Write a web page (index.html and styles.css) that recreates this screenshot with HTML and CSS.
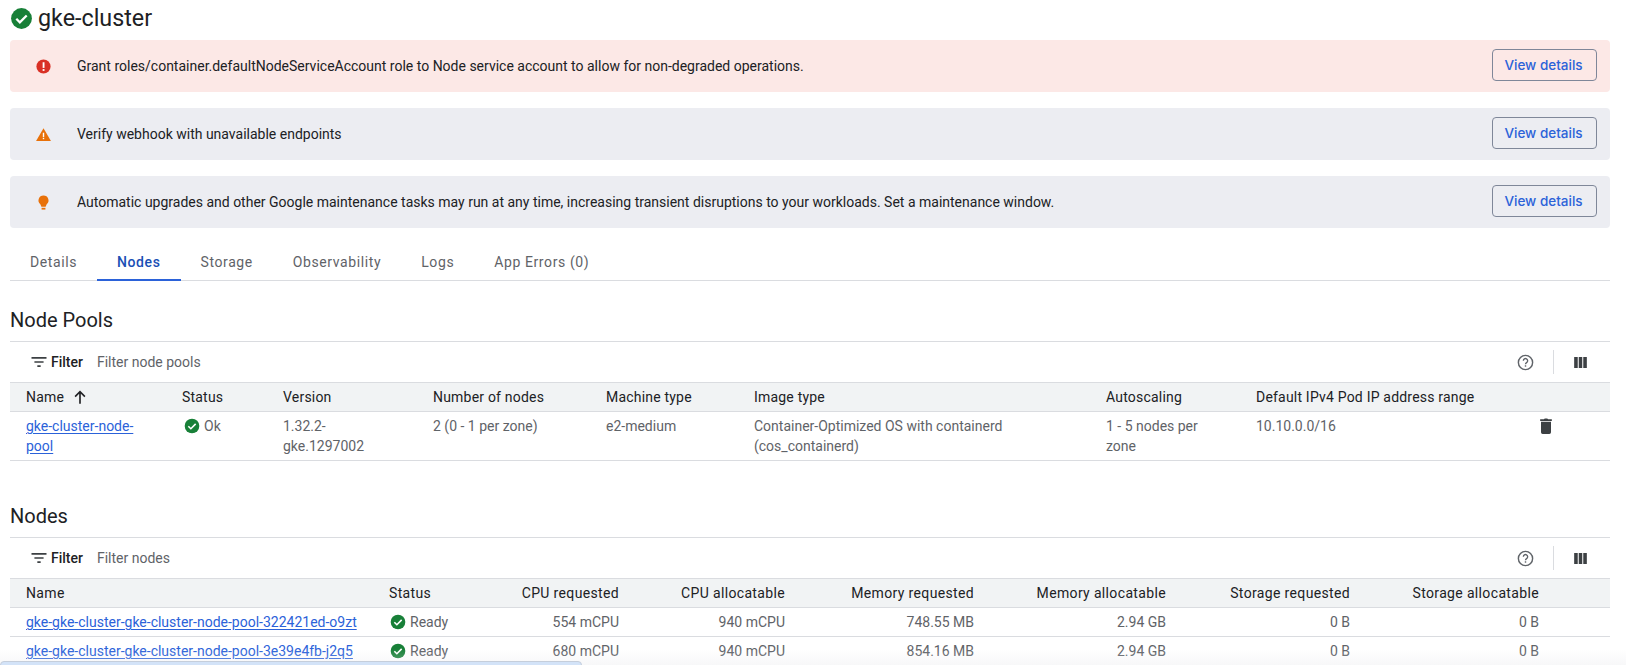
FILE: index.html
```html
<!DOCTYPE html>
<html lang="en">
<head>
  <meta charset="UTF-8" />
  <title>gke-cluster</title>
  <link rel="stylesheet" href="styles.css">
</head>
<body>
  <div class="title-row">
    <svg class="title-icon" viewBox="0 0 24 24"><circle cx="12" cy="12" r="10" fill="#188038"/><path d="M7 12.300l3.400 3.400L17 9.100" fill="none" stroke="#fff" stroke-width="2.200"/></svg>
    <h1>gke-cluster</h1>
  </div>

  <div class="banner error">
    <svg class="banner-icon" viewBox="0 0 24 24"><circle cx="12" cy="12" r="10" fill="#d93025"/><rect x="10.800" y="6" width="2.600" height="8" fill="#fff"/><rect x="10.800" y="15.600" width="2.600" height="2.600" fill="#fff"/></svg>
    <span class="banner-text">Grant roles/container.defaultNodeServiceAccount role to Node service account to allow for non-degraded operations.</span>
    <button class="details-btn">View details</button>
  </div>
  <div class="banner">
    <svg class="banner-icon" viewBox="0 0 24 24"><path d="M12 3L1.500 21h21z" fill="#e8710a"/><rect x="11" y="9.500" width="2" height="6" fill="#fff"/><rect x="11" y="16.600" width="2" height="2" fill="#fff"/></svg>
    <span class="banner-text">Verify webhook with unavailable endpoints</span>
    <button class="details-btn">View details</button>
  </div>
  <div class="banner">
    <svg class="banner-icon" viewBox="0 0 24 24"><path d="M12 2a7 7 0 0 0-4.500 12.400L9 18h6l1.500-3.600A7 7 0 0 0 12 2z" fill="#e8710a"/><rect x="9.300" y="19.500" width="5.400" height="2.500" fill="#e8710a"/></svg>
    <span class="banner-text">Automatic upgrades and other Google maintenance tasks may run at any time, increasing transient disruptions to your workloads. Set a maintenance window.</span>
    <button class="details-btn">View details</button>
  </div>

  <div class="tabs">
    <a class="tab">Details</a>
    <a class="tab active">Nodes</a>
    <a class="tab">Storage</a>
    <a class="tab">Observability</a>
    <a class="tab">Logs</a>
    <a class="tab">App Errors (0)</a>
  </div>

  <h2 class="section-title pools-title">Node Pools</h2>
  <div class="filter-bar">
    <svg class="filter-icon" viewBox="0 0 24 24"><path d="M3 6h18v2H3zM6.500 11h11v2h-11zM10 16h4v2h-4z" fill="#3c4043"/></svg>
    <span class="filter-label">Filter</span>
    <span class="filter-hint">Filter node pools</span>
    <svg class="help-icon" viewBox="0 0 24 24"><circle cx="12" cy="12" r="9" fill="none" stroke="#5f6368" stroke-width="1.800"/><path d="M9.300 9.700a2.700 2.700 0 1 1 4.300 2.200c-1 .7-1.600 1.200-1.600 2.400" fill="none" stroke="#5f6368" stroke-width="1.700"/><rect x="11.100" y="15.500" width="1.800" height="1.800" fill="#5f6368"/></svg>
    <span class="bar-divider"></span>
    <svg class="columns-icon" viewBox="0 0 24 24"><path d="M4 5h4.500v14H4zM9.800 5h4.400v14H9.800zM15.500 5H20v14h-4.500z" fill="#3c4043"/></svg>
  </div>
  <div class="table pool-table">
    <div class="row head">
      <span class="name-cell">Name <svg class="sort-icon" viewBox="0 0 24 24"><path d="M12 21V5M5.500 11.500L12 5l6.500 6.500" fill="none" stroke="#202124" stroke-width="2.200"/></svg></span>
      <span>Status</span><span>Version</span><span>Number of nodes</span><span>Machine type</span><span>Image type</span><span>Autoscaling</span><span>Default IPv4 Pod IP address range</span><span></span>
    </div>
    <div class="row body tall">
      <span><a class="link">gke-cluster-node-pool</a></span>
      <span class="status"><svg class="status-icon" viewBox="0 0 24 24"><circle cx="12" cy="12" r="11" fill="#188038"/><path d="M6.500 12.300l3.800 3.800 7.200-7.200" fill="none" stroke="#fff" stroke-width="2.400"/></svg>Ok</span>
      <span>1.32.2-gke.1297002</span>
      <span>2 (0 - 1 per zone)</span>
      <span>e2-medium</span>
      <span>Container-Optimized OS with containerd (cos_containerd)</span>
      <span>1 - 5 nodes per zone</span>
      <span>10.10.0.0/16</span>
      <span class="trash-cell"><svg class="trash-icon" viewBox="0 0 24 24"><path d="M6 7h12v12.500a2 2 0 0 1-2 2H8a2 2 0 0 1-2-2zM5 4h4.500l1-1h3l1 1H19v2H5z" fill="#3c4043"/></svg></span>
    </div>
  </div>

  <h2 class="section-title nodes-title">Nodes</h2>
  <div class="filter-bar">
    <svg class="filter-icon" viewBox="0 0 24 24"><path d="M3 6h18v2H3zM6.500 11h11v2h-11zM10 16h4v2h-4z" fill="#3c4043"/></svg>
    <span class="filter-label">Filter</span>
    <span class="filter-hint">Filter nodes</span>
    <svg class="help-icon" viewBox="0 0 24 24"><circle cx="12" cy="12" r="9" fill="none" stroke="#5f6368" stroke-width="1.800"/><path d="M9.300 9.700a2.700 2.700 0 1 1 4.300 2.200c-1 .7-1.600 1.200-1.600 2.400" fill="none" stroke="#5f6368" stroke-width="1.700"/><rect x="11.100" y="15.500" width="1.800" height="1.800" fill="#5f6368"/></svg>
    <span class="bar-divider"></span>
    <svg class="columns-icon" viewBox="0 0 24 24"><path d="M4 5h4.500v14H4zM9.800 5h4.400v14H9.800zM15.500 5H20v14h-4.500z" fill="#3c4043"/></svg>
  </div>
  <div class="table node-table">
    <div class="row head">
      <span>Name</span><span>Status</span>
      <span class="num">CPU requested</span><span class="num">CPU allocatable</span><span class="num">Memory requested</span><span class="num">Memory allocatable</span><span class="num">Storage requested</span><span class="num">Storage allocatable</span>
    </div>
    <div class="row body">
      <span><a class="link">gke-gke-cluster-gke-cluster-node-pool-322421ed-o9zt</a></span>
      <span class="status"><svg class="status-icon" viewBox="0 0 24 24"><circle cx="12" cy="12" r="11" fill="#188038"/><path d="M6.500 12.300l3.800 3.800 7.200-7.200" fill="none" stroke="#fff" stroke-width="2.400"/></svg>Ready</span>
      <span class="num">554 mCPU</span><span class="num">940 mCPU</span><span class="num">748.55 MB</span><span class="num">2.94 GB</span><span class="num">0 B</span><span class="num">0 B</span>
    </div>
    <div class="row body">
      <span><a class="link">gke-gke-cluster-gke-cluster-node-pool-3e39e4fb-j2q5</a></span>
      <span class="status"><svg class="status-icon" viewBox="0 0 24 24"><circle cx="12" cy="12" r="11" fill="#188038"/><path d="M6.500 12.300l3.800 3.800 7.200-7.200" fill="none" stroke="#fff" stroke-width="2.400"/></svg>Ready</span>
      <span class="num">680 mCPU</span><span class="num">940 mCPU</span><span class="num">854.16 MB</span><span class="num">2.94 GB</span><span class="num">0 B</span><span class="num">0 B</span>
    </div>
  </div>

  <div class="bottom-fade"></div>
  <div class="bottom-panel"></div>
</body>
</html>
```

FILE: styles.css
```css
html, body {
  height: 665px;
  overflow: hidden;
}

body {
  font-family: Roboto, "Liberation Sans", sans-serif;
  font-size: 14px;
  color: #202124;
  background: #fff;
  margin: 0;
  padding: 0 16px 0 10px;
  position: relative;
}

.title-row {
  display: flex;
  align-items: center;
  gap: 4px;
  height: 36px;
  margin-bottom: 4px;
}

.title-icon {
  width: 25px;
  height: 25px;
  margin-left: -1px;
}

h1 {
  font-size: 23.300px;
  font-weight: 400;
  margin: 0;
}

.banner {
  display: flex;
  align-items: center;
  height: 52px;
  margin-bottom: 16px;
  background: #ecedf2;
  border-radius: 4px;
  padding: 0 13px 0 25px;
}

.banner.error {
  background: #fce8e6;
}

.banner-icon {
  width: 17px;
  height: 17px;
}

.banner-text {
  flex: 1;
  margin-left: 25px;
  font-size: 14px;
}

.details-btn {
  font-family: Inter, Roboto, sans-serif;
  font-size: 13.500px;
  font-weight: 500;
  color: #2b62d9;
  background: transparent;
  border: 1px solid #7f8799;
  border-radius: 4px;
  width: 105px;
  height: 32px;
  padding: 0 2px 0 0;
  margin-bottom: 2px;
}

.tabs {
  display: flex;
  border-bottom: 1px solid #dadce0;
  height: 36px;
  margin-top: 16px;
}

.tab {
  padding: 0 20px;
  line-height: 36px;
  color: #5f6368;
  font-size: 14px;
  letter-spacing: 0.6px;
}

.tab.active {
  color: #1a4fb5;
  font-weight: 500;
  border-bottom: 2px solid #2b62d9;
  height: 35px;
}

.section-title {
  font-size: 20px;
  font-weight: 400;
  margin: 0;
  height: 42px;
  line-height: 42px;
  border-bottom: 1px solid #dadce0;
}

.pools-title {
  margin-top: 18px;
}

.nodes-title {
  margin-top: 34px;
}

.filter-bar {
  display: flex;
  align-items: center;
  height: 40px;
  padding-left: 19px;
  padding-right: 20px;
}

.filter-icon {
  width: 20px;
  height: 20px;
}

.filter-label {
  font-weight: 500;
  margin-left: 2px;
  font-size: 14px;
}

.filter-hint {
  flex: 1;
  margin-left: 14px;
  color: #5f6368;
  font-size: 14px;
}

.help-icon {
  width: 19px;
  height: 19px;
}

.bar-divider {
  width: 1px;
  height: 24px;
  background: #dadce0;
  margin: 0 17px 0 18px;
}

.columns-icon {
  width: 19px;
  height: 19px;
}

.table {
  font-size: 14px;
  color: #5f6368;
}

.row {
  display: grid;
  padding-left: 16px;
  border-bottom: 1px solid #dadce0;
}

.pool-table .row {
  grid-template-columns: 156px 101px 150px 173px 148px 352px 150px 286px 1fr;
}

.node-table .row {
  grid-template-columns: 363px 100px 130px 166px 189px 192px 184px 189px 1fr;
}

.head {
  background: #f1f3f4;
  color: #202124;
  height: 28px;
  align-items: center;
  border-top: 1px solid #dadce0;
  letter-spacing: 0.2px;
}

.node-table .head {
  letter-spacing: 0.35px;
}

.body {
  height: 28px;
  align-items: center;
}

.body.tall {
  height: 48px;
  align-items: start;
  line-height: 20px;
}

.body.tall > span {
  padding-top: 4px;
  padding-right: 32px;
}

.name-cell {
  display: flex;
  align-items: center;
  gap: 7px;
}

.sort-icon {
  width: 18px;
  height: 18px;
}

.link {
  color: #2b62d9;
  text-decoration: underline;
  text-underline-offset: 2px;
}

.status {
  display: flex;
  align-items: center;
  gap: 4px;
  padding-left: 2px;
}

.node-table .status {
  padding-left: 1px;
}

.status-icon {
  width: 16px;
  height: 16px;
  flex: none;
}

.body.tall .status {
  align-items: flex-start;
}

.body.tall .status-icon {
  margin-top: 2px;
}

.num {
  text-align: right;
}

.trash-cell {
  display: flex;
}

.trash-icon {
  width: 20px;
  height: 20px;
  margin-left: -6px;
  flex: none;
}

.bottom-fade {
  position: absolute;
  left: 0;
  right: 0;
  bottom: 0;
  height: 16px;
  background: linear-gradient(rgba(240, 241, 243, 0), rgba(232, 234, 237, 0.35));
  pointer-events: none;
}

.bottom-panel {
  position: absolute;
  left: 0;
  bottom: -8px;
  width: 580px;
  height: 10px;
  background: #d3e3f8;
  border: 1px solid #c5cedb;
  border-radius: 4px;
}
```
